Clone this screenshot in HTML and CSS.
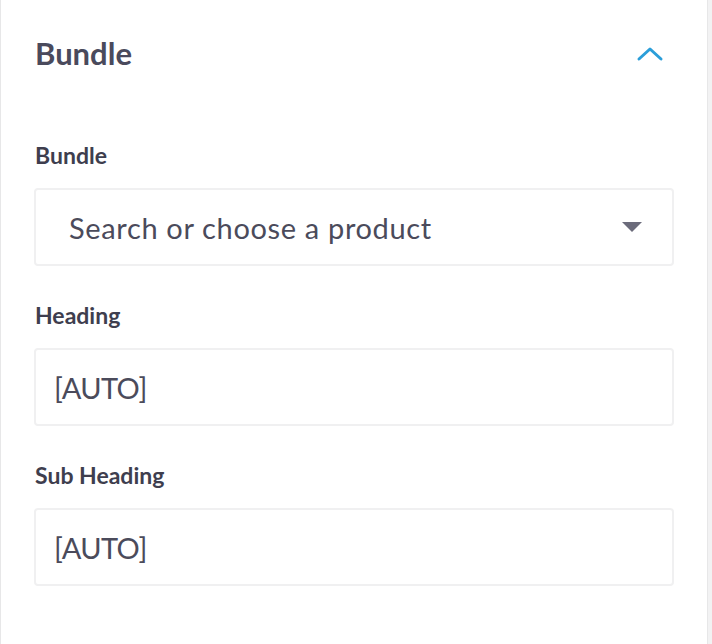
FILE: index.html
```html
<!DOCTYPE html>
<html>
<head>
<meta charset="utf-8">
<link rel="stylesheet" href="styles.css">
</head>
<body>
<div class="card">
  <div class="card-header">
    <h2 class="card-title">Bundle</h2>
    <svg class="chevron" width="28" height="16" viewBox="0 0 28 16"><path d="M3 13 L14 3 L25 13" fill="none" stroke="#2b9ed9" stroke-width="3" stroke-linecap="round" stroke-linejoin="round"/></svg>
  </div>
  <div class="field">
    <label class="field-label">Bundle</label>
    <div class="input select">
      <span class="placeholder">Search or choose a product</span>
      <span class="caret"></span>
    </div>
  </div>
  <div class="field">
    <label class="field-label">Heading</label>
    <div class="input"><span class="value">[AUTO]</span></div>
  </div>
  <div class="field">
    <label class="field-label">Sub Heading</label>
    <div class="input"><span class="value">[AUTO]</span></div>
  </div>
</div>
</body>
</html>
```

FILE: styles.css
```css
html, body {
  margin: 0;
  padding: 0;
  height: 100%;
}
body {
  background: #f2f2f3;
  font-family: Lato, "Liberation Sans", sans-serif;
  color: #4a4a5a;
}
.card {
  margin-left: 1px;
  width: 706px;
  box-sizing: border-box;
  min-height: 100%;
  background: #fff;
  box-shadow: 0 0 1px rgba(0,0,0,0.25);
  padding: 0 33px 0 33px;
}
.card-header {
  height: 106px;
  display: flex;
  align-items: center;
  justify-content: space-between;
}
.card-title {
  margin: 0;
  font-size: 31px;
  font-weight: 700;
  color: #4a4a5c;
  padding-left: 1px;
}
.chevron {
  margin-right: 10px;
  margin-top: 2px;
}
.field-label {
  display: block;
  font-size: 23px;
  font-weight: 700;
  line-height: 26px;
  color: #3e3e4e;
  padding-left: 1px;
  margin-top: 36px;
  margin-bottom: 20px;
}
.field:first-of-type .field-label {
  margin-top: 37px;
}
.input {
  height: 78px;
  box-sizing: border-box;
  border: 2px solid #f0f0f1;
  border-radius: 4px;
  display: flex;
  align-items: center;
  padding: 0 18px;
  font-size: 29px;
  color: #4b4b5b;
}
.select {
  padding: 0 30px 0 33px;
  justify-content: space-between;
}
.placeholder {
  letter-spacing: 0.65px;
}
.caret {
  width: 0;
  height: 0;
  border-left: 10px solid transparent;
  border-right: 10px solid transparent;
  border-top: 10px solid #6b6b7b;
}
.value {
  font-weight: 400;
  letter-spacing: -0.6px;
}
```
